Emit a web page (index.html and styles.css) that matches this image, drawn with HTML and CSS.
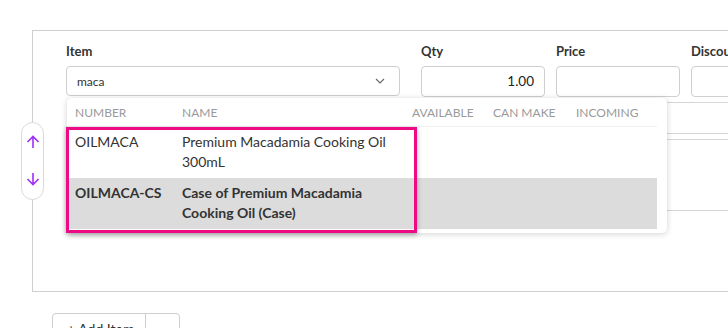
FILE: index.html
```html
<!DOCTYPE html>
<html lang="en">
<head>
    <meta charset="UTF-8">
    <title>Items</title>
    <link rel="stylesheet" href="styles.css">
</head>
<body>
    <div class="page-head">
        <span class="page-title">Items</span>
    </div>

    <div class="card">
        <!-- Row move controls -->
        <div class="move-pill">
            <svg class="move-arrow" viewBox="0 0 14 14" width="14" height="14">
                <path d="M7 13V1.5M1.5 7L7 1.5 12.5 7" fill="none" stroke="#9f2ff5" stroke-width="1.6"/>
            </svg>
            <svg class="move-arrow" viewBox="0 0 14 14" width="14" height="14">
                <path d="M7 1V12.5M1.5 7L7 12.5 12.5 7" fill="none" stroke="#9f2ff5" stroke-width="1.6"/>
            </svg>
        </div>

        <div class="field-row">
            <div class="field field-item">
                <label class="field-label">Item</label>
                <div class="select-wrap">
                    <div class="select-box">
                        <span class="select-value">maca</span>
                        <svg class="chevron" viewBox="0 0 10 6" width="10" height="6">
                            <path d="M1 1l4 4 4-4" fill="none" stroke="#666" stroke-width="1.1"/>
                        </svg>
                    </div>

                    <div class="dropdown">
                        <table class="result-table">
                            <colgroup>
                                <col class="col-number">
                                <col class="col-name">
                                <col class="col-available">
                                <col class="col-canmake">
                                <col class="col-incoming">
                            </colgroup>
                            <thead>
                                <tr>
                                    <th>Number</th>
                                    <th>Name</th>
                                    <th>Available</th>
                                    <th>Can Make</th>
                                    <th>Incoming</th>
                                </tr>
                            </thead>
                            <tbody>
                                <tr>
                                    <td>OILMACA</td>
                                    <td>Premium Macadamia Cooking Oil 300mL</td>
                                    <td></td>
                                    <td></td>
                                    <td></td>
                                </tr>
                                <tr class="active">
                                    <td>OILMACA-CS</td>
                                    <td>Case of Premium Macadamia Cooking Oil (Case)</td>
                                    <td></td>
                                    <td></td>
                                    <td></td>
                                </tr>
                            </tbody>
                        </table>
                        <div class="highlight"></div>
                    </div>
                </div>
            </div>
            <div class="field field-qty">
                <label class="field-label">Qty</label>
                <div class="input-box num">1.00</div>
            </div>
            <div class="field field-price">
                <label class="field-label">Price</label>
                <div class="input-box"></div>
            </div>
            <div class="field field-disc">
                <label class="field-label">Discount</label>
                <div class="input-box"></div>
            </div>
        </div>

        <div class="lower">
            <div class="lower-input"></div>
            <div class="lower-area"></div>
        </div>
    </div>

    <div class="add-row">
        <div class="split-button">
            <span class="split-main">+ Add Item</span>
            <span class="split-side"></span>
        </div>
    </div>
</body>
</html>
```

FILE: styles.css
```css
/* Global */
body {
    margin: 0;
    width: 728px;
    height: 328px;
    overflow: hidden;
    background: #fff;
    font-family: 'Lato', 'Liberation Sans', sans-serif;
    color: #333;
}

.page-head {
    height: 40px;
    margin-top: -10px;
    padding-left: 155px;
    font-size: 11px;
    line-height: 12px;
    box-sizing: border-box;
}

/* Line card */
.card {
    position: relative;
    margin-left: 32px;
    height: 262px;
    box-sizing: border-box;
    border: 1px solid #cfcfcf;
    border-right: none;
    padding: 12px 0 0 33px;
}

.move-pill {
    position: absolute;
    left: -12px;
    top: 91px;
    width: 23px;
    height: 78px;
    box-sizing: border-box;
    border: 1px solid #dadada;
    border-radius: 12px;
    background: #fff;
    display: flex;
    flex-direction: column;
    align-items: center;
    justify-content: space-between;
    padding: 12px 0 13px;
}

.move-arrow {
    display: block;
}

/* Fields */
.field-row {
    display: flex;
}

.field {
    flex-shrink: 0;
    display: flex;
    flex-direction: column;
}

.field-item {
    width: 334px;
}

.field-qty {
    width: 124px;
    margin-left: 21px;
}

.field-price,
.field-disc {
    width: 124px;
    margin-left: 11px;
}

.field-label {
    font-size: 13px;
    font-weight: 700;
    line-height: 16px;
    margin-bottom: 7px;
    color: #333;
}

.select-wrap {
    position: relative;
}

.select-box {
    height: 30px;
    box-sizing: border-box;
    border: 1px solid #cfcfcf;
    border-radius: 4px;
    display: flex;
    align-items: center;
    justify-content: space-between;
    padding: 0 14px 0 10px;
    font-size: 12px;
}

.chevron {
    display: block;
}

.input-box {
    height: 31px;
    box-sizing: border-box;
    border: 1px solid #cfcfcf;
    border-radius: 4px;
    padding: 0 10px;
    font-size: 13.5px;
    line-height: 29px;
    color: #222;
}

.input-box.num {
    text-align: right;
}

.lower {
    padding-left: 355px;
}

.lower-input {
    margin-top: 5px;
    height: 32px;
    box-sizing: border-box;
    border: 1px solid #d6d6d6;
    border-right: none;
}

.lower-area {
    margin-top: 5px;
    height: 72px;
    box-sizing: border-box;
    border: 1px solid #d6d6d6;
    border-right: none;
}

/* Search dropdown */
.dropdown {
    position: absolute;
    left: 1px;
    top: calc(100% + 2px);
    width: 600px;
    box-sizing: border-box;
    padding: 0 10px 4px 0;
    background: #fff;
    border-radius: 5px;
    box-shadow: 0 1px 6px rgba(0, 0, 0, 0.18);
    z-index: 5;
}

.result-table {
    width: 590px;
    table-layout: fixed;
    border-collapse: collapse;
}

.col-number { width: 107px; }
.col-name { width: 230px; }
.col-available { width: 81px; }
.col-canmake { width: 83px; }
.col-incoming { width: 89px; }

.result-table th {
    height: 28px;
    padding: 0 8px;
    text-align: left;
    font-size: 12px;
    font-weight: 400;
    text-transform: uppercase;
    color: #9a9a9a;
    border-bottom: 1px solid #f0f0f0;
    white-space: nowrap;
}

.result-table td {
    height: 40px;
    padding: 5px 8px 6px;
    font-size: 14px;
    line-height: 20px;
    vertical-align: top;
    color: #333;
}

.result-table tr.active td {
    background: #dcdcdc;
    font-weight: 700;
}

.highlight {
    position: absolute;
    left: -1px;
    top: 29px;
    width: 351px;
    height: 106px;
    box-sizing: border-box;
    border: 3px solid #ee0a84;
    box-shadow: 0 2px 5px rgba(0, 0, 0, 0.3);
}

/* Add item button */
.add-row {
    margin: 21px 0 0 52px;
}

.split-button {
    display: inline-flex;
    height: 32px;
    border: 1px solid #cfcfcf;
    border-radius: 4px;
    box-sizing: border-box;
}

.split-main {
    width: 93px;
    padding-left: 14px;
    box-sizing: border-box;
    font-size: 14px;
    line-height: 30px;
    border-right: 1px solid #cfcfcf;
}

.split-side {
    width: 33px;
}
```
